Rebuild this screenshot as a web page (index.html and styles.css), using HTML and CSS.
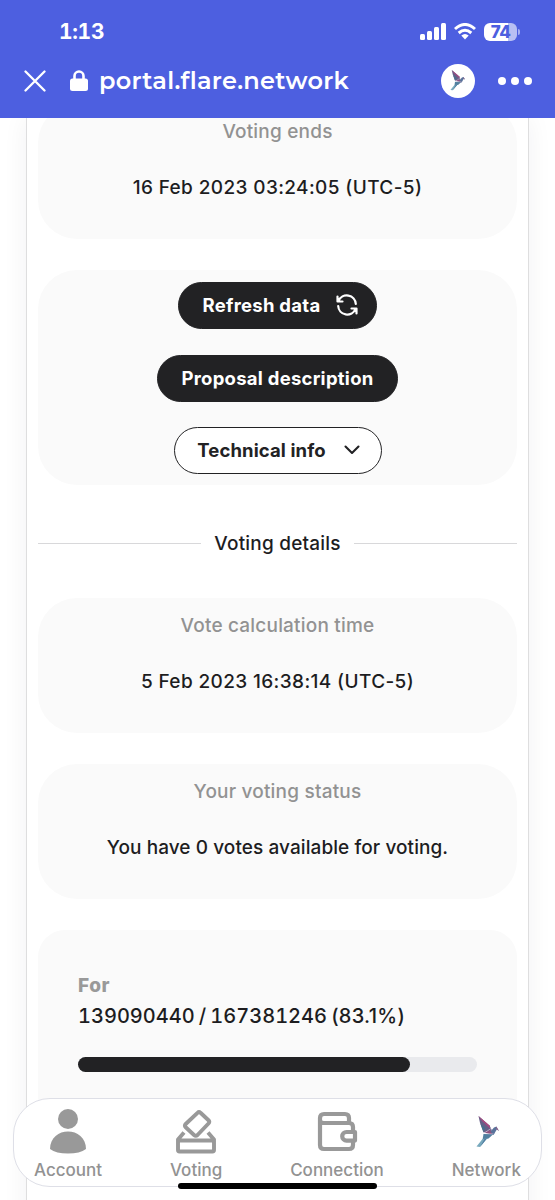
FILE: index.html
```html
<!DOCTYPE html>
<html lang="en">
<head>
<meta charset="utf-8">
<title>Flare Portal</title>
<link rel="stylesheet" href="styles.css">
</head>
<body>
<svg width="0" height="0" class="defs">
  <symbol id="bird" viewBox="0 0 24 32">
    <path fill="#665f88" d="M2.500 0 13.500 9.500 16 14.500 7.500 16.500 4 7z"/>
    <path fill="#a9487f" d="M2.500 0 13.500 9.500 14.500 13 6 5z"/>
    <path fill="#476f8c" d="M4.500 8 9.500 12 7.500 16z"/>
    <path fill="#8e527f" d="M8 16.500 14 14 18.500 17 17 19z"/>
    <path fill="#59729a" d="M14.500 15.500 18 11.500 20.500 10.500 23 15 20.800 13.500 17.500 19z"/>
    <path fill="#a45882" d="M20 10.500 23 15 20.500 13z"/>
    <path fill="#527f9f" d="M7.500 18 17.500 18 12.500 22.500 6.500 24z"/>
    <path fill="#78a9bd" d="M6.500 23 11 22.500 4 31 .5 30.500z"/>
    <path fill="#507ca0" d="M8.500 23 11 22.500 4 31z"/>
    <path fill="none" stroke="#eceef8" stroke-width=".5" d="M15 12.500 7.500 17.500 17.500 18"/>
  </symbol>
</svg>
<div class="screen">
  <header class="top">
    <div class="status">
      <span class="clock">1:13</span>
      <div class="indicators">
        <svg class="signal" viewBox="0 0 26 17"><g fill="#fff"><rect x="0" y="11" width="5" height="6" rx="1.500"/><rect x="7" y="8" width="5" height="9" rx="1.500"/><rect x="14" y="4" width="5" height="13" rx="1.500"/><rect x="21" y="0" width="5" height="17" rx="1.500"/></g></svg>
        <svg class="wifi" viewBox="0 0 22 17"><g fill="none" stroke="#fff" stroke-width="3"><path d="M1 6Q11-3 21 6"/><path d="M4.700 10Q11 4.500 17.300 10"/></g><path fill="#fff" d="M7.300 12.500Q11 9.300 14.700 12.500L11 16.500z"/></svg>
        <span class="battery">74</span><span class="battery-tip"></span>
      </div>
    </div>
    <div class="address">
      <svg class="close" viewBox="0 0 22 22"><path d="M1.500 1.500l19 19M20.500 1.500l-19 19" stroke="#fff" stroke-width="2.300" stroke-linecap="round"/></svg>
      <svg class="lock" viewBox="0 0 18 21"><path d="M4.500 10V6a4.500 4.500 0 0 1 9 0v4" fill="none" stroke="#fff" stroke-width="2.600"/><rect y="8.500" width="18" height="12.500" rx="2.500" fill="#fff"/></svg>
      <span class="url">portal.flare.network</span>
      <span class="site"><svg viewBox="0 0 24 32"><use href="#bird"/></svg></span>
      <span class="dots"><i></i><i></i><i></i></span>
    </div>
  </header>
  <main class="page">
    <div class="sheet">
      <section class="card first"><h3>Voting ends</h3><p class="date">16 Feb 2023 03:24:05 (UTC-5)</p></section>
      <section class="card actions">
        <button class="btn refresh"><span>Refresh data</span><svg viewBox="0 0 22 22" fill="none" stroke="#fff" stroke-width="2.200" stroke-linecap="round" stroke-linejoin="round"><path d="M1.500 2.500v5h5M2.500 7A9 9 0 0 1 19.800 10M20.500 19.500v-5h-5M19.500 15A9 9 0 0 1 2.200 12"/></svg></button>
        <button class="btn proposal"><span>Proposal description</span></button>
        <button class="btn technical"><span>Technical info</span><svg viewBox="0 0 16 10"><path d="M1.500 1.500 8 8l6.500-6.500" fill="none" stroke="#222224" stroke-width="2.100" stroke-linecap="round" stroke-linejoin="round"/></svg></button>
      </section>
      <h2 class="divider"><span>Voting details</span></h2>
      <section class="card"><h3>Vote calculation time</h3><p class="date">5 Feb 2023 16:38:14 (UTC-5)</p></section>
      <section class="card"><h3>Your voting status</h3><p>You have 0 votes available for voting.</p></section>
      <section class="card result">
        <h4>For</h4><p><span class="count">139090440 / 167381246</span> <span class="share">(83.1%)</span></p>
        <div class="bar"><div class="fill" style="width:83.1%"></div></div>
      </section>
    </div>
  </main>
  <nav class="tabs">
    <a class="tab account"><svg viewBox="0 0 40 48"><g fill="#999"><circle cx="20" cy="12" r="10"/><path d="M2 42C2 18.500 38 18.500 38 42Q32 46.500 20 46.500T2 42z"/></g></svg><span>Account</span></a>
    <a class="tab voting"><svg viewBox="0 0 42 48"><g fill="none" stroke="#999" stroke-width="3.900" stroke-linejoin="round"><path d="M22.500 5.800Q24 4.300 25.500 5.800L33.500 13.200Q35 14.800 33.500 16.500L22.500 28Q20.800 29.600 19 28L10.700 20.300Q9 18.700 10.700 17z"/><path d="M9 25.500 3 32.500V43q0 1.500 1.500 1.500h33q1.500 0 1.500-1.500V32.500L33 25.500M3 33.500H39"/></g></svg><span>Voting</span></a>
    <a class="tab connection"><svg viewBox="0 0 42 48"><g fill="none" stroke="#999" stroke-width="4.200" stroke-linejoin="round"><path d="M33 15V11Q33 7 29 7H8Q4 7 4 11V38Q4 42 8 42H33Q37 42 37 38V34M4 13q0 3 4 3H33Q37 16 37 20v5"/><path d="M39 25H30.500a4.300 4.300 0 0 0 0 8.600H39z"/></g></svg><span>Connection</span></a>
    <a class="tab network"><svg viewBox="0 0 24 32"><use href="#bird"/></svg><span>Network</span></a>
  </nav>
  <div class="home"></div>
</div>
</body>
</html>
```
FILE: styles.css
```css
* { box-sizing: border-box; }
body { margin: 0; font-family: Inter, "Liberation Sans", sans-serif; font-feature-settings: "calt" 0; color: #1d1d1f; background: #fff; }
h2, h3, h4, p { margin: 0; }
.defs { position: absolute; }
.screen { position: relative; width: 555px; height: 1200px; overflow: hidden; display: flex; flex-direction: column; }
.top { flex: none; height: 118px; background: #4d5fe0; color: #fff; }
.status { height: 57px; padding: 8px 35px 0 59px; display: flex; justify-content: space-between; align-items: center; }
.clock { font-size: 21px; font-weight: 700; line-height: 26px; margin-top: -2px; letter-spacing: -.3px; font-variant-numeric: tabular-nums; }
.indicators { display: flex; align-items: center; margin-top: -2px; }
.signal { width: 26px; height: 17px; margin-right: 8px; }
.wifi { width: 22px; height: 17px; margin-right: 8px; }
.battery { width: 33px; height: 18px; border-radius: 6px; background: linear-gradient(90deg, #fff 74%, #b8bff3 74%); color: #4d5fe0; font-size: 17px; line-height: 18px; font-weight: 800; text-align: center; letter-spacing: -.5px; }
.battery-tip { width: 2px; height: 6px; margin-left: 1px; border-radius: 0 2px 2px 0; background: #a6aff0; }
.address { height: 47px; display: flex; align-items: center; padding: 0 23px 0 24px; }
.close { width: 22px; height: 22px; margin-right: 24px; }
.lock { width: 18px; height: 21px; margin-right: 11px; }
.url { flex: 1; font-family: Montserrat, Inter, sans-serif; font-size: 24px; font-weight: 600; line-height: 30px; letter-spacing: .3px; white-space: nowrap; }
.site { width: 34px; height: 34px; border-radius: 50%; background: #fff; display: flex; align-items: center; justify-content: center; margin-right: 23px; }
.site svg { width: 16px; height: 21px; }
.dots { display: flex; gap: 5px; }
.dots i { width: 8px; height: 8px; border-radius: 50%; background: #fff; }
.page { flex: 1; min-height: 0; padding: 0 26px; overflow: hidden; }
.sheet { height: 1120px; padding: 0 11px; border: solid #dededf; border-width: 0 1px; box-shadow: 0 0 24px rgba(35, 35, 55, .06); display: flex; flex-direction: column; }
.card { flex: none; width: 479px; height: 135px; border-radius: 39px; background: #fafafa; margin-bottom: 31px; padding-top: 16px; text-align: center; }
.card.first { margin-top: -14px; }
.card h3 { font-size: 19px; line-height: 24px; font-weight: 500; letter-spacing: .2px; color: #929292; }
.card p { font-size: 19px; line-height: 26px; font-weight: 500; letter-spacing: .08px; margin-top: 31px; }
.card .date { letter-spacing: .38px; }
.actions { height: 215px; padding-top: 12px; display: flex; flex-direction: column; align-items: center; gap: 26px; margin-bottom: 45px; }
.btn { flex: none; height: 47px; border: 1.500px solid #222224; border-radius: 24px; background: #222224; color: #fff; font: 700 18.500px/24px Inter, sans-serif; letter-spacing: .26px; display: flex; align-items: center; justify-content: center; padding: 0 0 2px; white-space: nowrap; }
.btn.refresh { width: 199px; gap: 16px; padding-left: 6px; }
.btn.refresh svg { width: 22px; height: 22px; }
.btn.proposal { width: 241px; }
.btn.technical { width: 208px; margin-top: -1px; gap: 18px; letter-spacing: .1px; padding-left: 2px; background: #fff; color: #222224; }
.btn.technical svg { width: 16px; height: 10px; }
.divider { display: flex; align-items: center; gap: 13px; height: 26px; margin-bottom: 42px; font-size: 19px; font-weight: 500; letter-spacing: .2px; white-space: nowrap; }
.divider::before, .divider::after { content: ""; flex: 1; height: 1px; background: #d8d8da; }
.card.result { height: 240px; border-radius: 27px; padding: 43px 40px 0; text-align: left; }
.result h4 { font-size: 19px; line-height: 26px; font-weight: 800; letter-spacing: .5px; color: #999; }
.card.result p { margin-top: 4px; font-size: 20px; letter-spacing: 0; word-spacing: -1.200px; white-space: nowrap; }
.count { font-variant-numeric: tabular-nums; }
.share { letter-spacing: .3px; }
.bar { height: 15px; margin-top: 28px; border-radius: 8px; background: #e9eaed; }
.fill { height: 100%; border-radius: 8px; background: #222224; }
.tabs { position: absolute; left: 13px; top: 1098px; width: 529px; height: 89px; border: 1px solid #dedfe7; border-radius: 37px; background: #fff; display: flex; justify-content: space-between; padding: 8px 20px 0; color: #999; }
.tab { display: flex; flex-direction: column; align-items: center; font-size: 17px; font-weight: 500; line-height: 24px; color: #929292; }
.tab svg { width: 42px; height: 48px; flex: none; margin-bottom: 3px; }
.tab.network svg { width: 24px; height: 32px; margin: 9px 0 10px 3px; }
.home { position: absolute; left: 178px; top: 1183px; width: 199px; height: 6px; border-radius: 3px; background: #000; }
```
